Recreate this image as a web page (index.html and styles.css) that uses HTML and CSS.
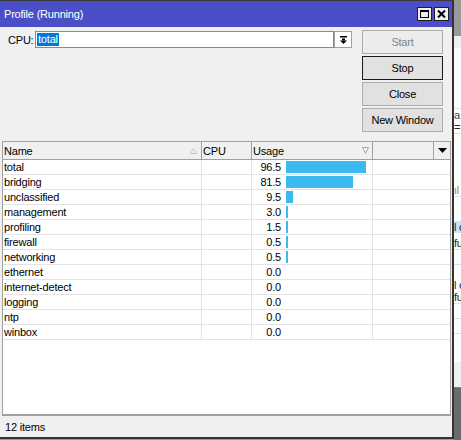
FILE: index.html
```html
<!DOCTYPE html>
<html>
<head>
<meta charset="utf-8">
<link rel="stylesheet" href="styles.css">
</head>
<body>
<div class="desktop">
  <div class="window">
    <div class="titlebar">
      <span class="title">Profile (Running)</span>
      <div class="tb-buttons">
        <span class="tb-btn"><svg width="9" height="8" viewBox="0 0 9 8"><rect x="0.5" y="0.5" width="8" height="7" fill="none" stroke="#000"/><rect x="0" y="0" width="9" height="2" fill="#000"/></svg></span>
        <span class="tb-btn"><svg width="9" height="8" viewBox="0 0 9 8"><path d="M1 0.5 L8 7.5 M8 0.5 L1 7.5" stroke="#000" stroke-width="2"/></svg></span>
      </div>
    </div>
    <div class="top">
      <div class="cpu-row">
        <span class="cpu-label">CPU:</span>
        <div class="combo">
          <div class="combo-input"><span class="sel">total</span></div>
          <div class="combo-btn"><svg width="7" height="8" viewBox="0 0 7 8"><rect x="0" y="0" width="7" height="1.5" fill="#000"/><rect x="2" y="2.5" width="3" height="2" fill="#000"/><polygon points="0,4.5 7,4.5 3.5,8" fill="#000"/></svg></div>
        </div>
      </div>
      <div class="buttons">
        <div class="btn disabled">Start</div>
        <div class="btn default">Stop</div>
        <div class="btn">Close</div>
        <div class="btn">New Window</div>
      </div>
    </div>
    <div class="table">
      <div class="thead">
        <div class="th"><span>Name</span><svg class="sort" width="7" height="6" viewBox="0 0 7 6"><polygon points="0.5,5.5 6.5,5.5 3.5,0.5" fill="none" stroke="#c8c8c8"/></svg></div>
        <div class="th"><span>CPU</span></div>
        <div class="th"><span>Usage</span><svg class="filter" width="7" height="7" viewBox="0 0 7 7"><path d="M0.5 0.5 H6.5 L3.5 6.5 Z" fill="none" stroke="#a8a8a8"/></svg></div>
        <div class="th"></div>
        <div class="th th-drop"><svg width="9" height="5" viewBox="0 0 9 5"><polygon points="0,0 9,0 4.5,5" fill="#000"/></svg></div>
      </div>
      <div class="tbody">
        <div class="row"><div class="td name">total</div><div class="td"></div><div class="td usage"><span class="val">96.5</span><span class="bar" style="width:80px"></span></div><div class="td last"></div></div>
        <div class="row"><div class="td name">bridging</div><div class="td"></div><div class="td usage"><span class="val">81.5</span><span class="bar" style="width:67px"></span></div><div class="td last"></div></div>
        <div class="row"><div class="td name">unclassified</div><div class="td"></div><div class="td usage"><span class="val">9.5</span><span class="bar" style="width:7px"></span></div><div class="td last"></div></div>
        <div class="row"><div class="td name">management</div><div class="td"></div><div class="td usage"><span class="val">3.0</span><span class="bar" style="width:2px"></span></div><div class="td last"></div></div>
        <div class="row"><div class="td name">profiling</div><div class="td"></div><div class="td usage"><span class="val">1.5</span><span class="bar" style="width:2px"></span></div><div class="td last"></div></div>
        <div class="row"><div class="td name">firewall</div><div class="td"></div><div class="td usage"><span class="val">0.5</span><span class="bar" style="width:2px"></span></div><div class="td last"></div></div>
        <div class="row"><div class="td name">networking</div><div class="td"></div><div class="td usage"><span class="val">0.5</span><span class="bar" style="width:2px"></span></div><div class="td last"></div></div>
        <div class="row"><div class="td name">ethernet</div><div class="td"></div><div class="td usage"><span class="val">0.0</span></div><div class="td last"></div></div>
        <div class="row"><div class="td name">internet-detect</div><div class="td"></div><div class="td usage"><span class="val">0.0</span></div><div class="td last"></div></div>
        <div class="row"><div class="td name">logging</div><div class="td"></div><div class="td usage"><span class="val">0.0</span></div><div class="td last"></div></div>
        <div class="row"><div class="td name">ntp</div><div class="td"></div><div class="td usage"><span class="val">0.0</span></div><div class="td last"></div></div>
        <div class="row"><div class="td name">winbox</div><div class="td"></div><div class="td usage"><span class="val">0.0</span></div><div class="td last"></div></div>
      </div>
    </div>
    <div class="status">12 items</div>
  </div>
  <div class="bgwin">
    <div class="bg-title"></div>
    <div class="bg-tool"></div>
    <div class="bg-list">
      <div class="bg-gap h60"></div>
      <div class="bg-line"></div>
      <div class="bg-txt blue">a</div>
      <div class="bg-txt">=:</div>
      <div class="bg-line"></div>
      <div class="bg-gap h50"></div>
      <div class="bg-txt chart">ıl</div>
      <div class="bg-line"></div>
      <div class="bg-gap h24"></div>
      <div class="bg-txt hl">l c</div>
      <div class="bg-gap h4"></div>
      <div class="bg-txt">fu</div>
      <div class="bg-line"></div>
      <div class="bg-gap h14"></div>
      <div class="bg-line"></div>
      <div class="bg-gap h14"></div>
      <div class="bg-txt">l c</div>
      <div class="bg-txt">fu</div>
      <div class="bg-line"></div>
      <div class="bg-gap h14"></div>
      <div class="bg-line"></div>
      <div class="bg-gap h14"></div>
      <div class="bg-line"></div>
    </div>
    <div class="bg-foot"></div>
    <div class="bg-desk"></div>
  </div>
</div>
</body>
</html>
```
FILE: styles.css
```css
body {
  margin: 0;
  width: 461px;
  height: 440px;
  overflow: hidden;
  background: #9c9c9c;
  font-family: "Liberation Sans", Arial, sans-serif;
  font-size: 11px;
  letter-spacing: -0.2px;
  color: #000;
}
.desktop {
  display: flex;
  align-items: flex-start;
}
.window {
  flex: none;
  width: 454px;
  height: 439px;
  box-sizing: border-box;
  border-top: 1px solid #3a3a3a;
  border-right: 2px solid #333;
  border-bottom: 2px solid #333;
  background: #f0f0f0;
  display: flex;
  flex-direction: column;
}
.titlebar {
  flex: none;
  height: 26px;
  background: #4a4fc8;
  color: #fff;
  display: flex;
  align-items: center;
  padding-left: 4px;
}
.title {
  flex: 1;
  line-height: 14px;
}
.tb-buttons {
  display: flex;
  gap: 2px;
  margin-right: 3px;
}
.tb-btn {
  width: 15px;
  height: 14px;
  box-sizing: border-box;
  border: 1px solid #1e1e1e;
  background: #f0f0f0;
  display: flex;
  align-items: center;
  justify-content: center;
}
.top {
  flex: none;
  height: 114px;
  box-sizing: border-box;
  padding-top: 3px;
  display: flex;
  align-items: flex-start;
}
.cpu-row {
  display: flex;
  align-items: center;
  margin-top: 1px;
  padding-left: 8px;
}
.cpu-label {
  width: 27px;
  line-height: 14px;
}
.combo {
  display: flex;
}
.combo-input {
  width: 299px;
  height: 17px;
  box-sizing: border-box;
  border: 1px solid #8a8a8a;
  background: #fff;
  padding-left: 1px;
  display: flex;
  align-items: center;
}
.sel {
  background: #0078d7;
  color: #fff;
  line-height: 13px;
  padding: 0 1px;
}
.combo-btn {
  width: 18px;
  height: 17px;
  box-sizing: border-box;
  border: 1px solid #a0a0a0;
  background: #fff;
  display: flex;
  align-items: center;
  justify-content: center;
}
.buttons {
  margin-left: 10px;
  display: flex;
  flex-direction: column;
  gap: 2px;
}
.btn {
  width: 81px;
  height: 24px;
  box-sizing: border-box;
  border: 1px solid #adadad;
  background: #e1e1e1;
  display: flex;
  align-items: center;
  justify-content: center;
  line-height: 14px;
}
.btn.default {
  border-color: #1a1a1a;
}
.btn.disabled {
  color: #838383;
  background: #ececec;
}
.table {
  flex: none;
  margin-left: 2px;
  width: 449px;
  height: 275px;
  box-sizing: border-box;
  border: 1px solid #a0a0a0;
  border-bottom: 2px solid #a0a0a0;
  background: #fff;
  display: flex;
  flex-direction: column;
}
.thead {
  flex: none;
  display: grid;
  grid-template-columns: 199px 50px 121px 61px 1fr;
  height: 18px;
  box-sizing: border-box;
  border-bottom: 1px solid #a0a0a0;
  background: #f0f0f0;
}
.th {
  border-right: 1px solid #a0a0a0;
  display: flex;
  align-items: center;
  justify-content: space-between;
  padding-left: 1px;
  line-height: 14px;
}
.th .sort {
  margin-right: 4px;
}
.th .filter {
  margin-right: 3px;
}
.th-drop {
  border-right: none;
  justify-content: center;
  padding-left: 0;
}
.tbody {
  display: flex;
  flex-direction: column;
}
.row {
  display: grid;
  grid-template-columns: 199px 50px 121px 1fr;
  height: 15px;
  box-sizing: border-box;
  border-bottom: 1px solid #e3e3e3;
}
.td {
  border-right: 1px solid #e3e3e3;
  line-height: 14px;
  white-space: nowrap;
}
.td.last {
  border-right: none;
}
.td.name {
  padding-left: 1px;
}
.usage {
  display: flex;
  align-items: center;
}
.val {
  width: 29px;
  text-align: right;
}
.bar {
  margin-left: 5px;
  height: 12px;
  background: #3cb9ee;
}
.status {
  flex: none;
  height: 21px;
  display: flex;
  align-items: center;
  padding-left: 5px;
}
.bgwin {
  flex: none;
  width: 7px;
  height: 440px;
  overflow: hidden;
  display: flex;
  flex-direction: column;
  white-space: nowrap;
}
.bg-title {
  height: 36px;
  background: #9a9a9a;
}
.bg-tool {
  height: 12px;
  background: #f0f0f0;
}
.bg-list {
  height: 314px;
  background: #fff;
  display: flex;
  flex-direction: column;
}
.bg-gap.h60 { height: 60px; }
.bg-gap.h50 { height: 50px; }
.bg-gap.h24 { height: 24px; }
.bg-gap.h14 { height: 14px; }
.bg-gap.h4 { height: 4px; }
.bg-line {
  height: 1px;
  background: #e0e0e0;
}
.bg-txt {
  height: 12px;
  line-height: 12px;
  color: #222;
}
.bg-txt.blue {
  color: #1d3f8a;
}
.bg-txt.chart {
  color: #c07a10;
}
.bg-txt.hl {
  background: #cce4f7;
}
.bg-foot {
  height: 25px;
  background: #f0f0f0;
  border-bottom: 1px solid #808080;
}
.bg-desk {
  flex: 1;
  background: #6b6b6b;
}
```
